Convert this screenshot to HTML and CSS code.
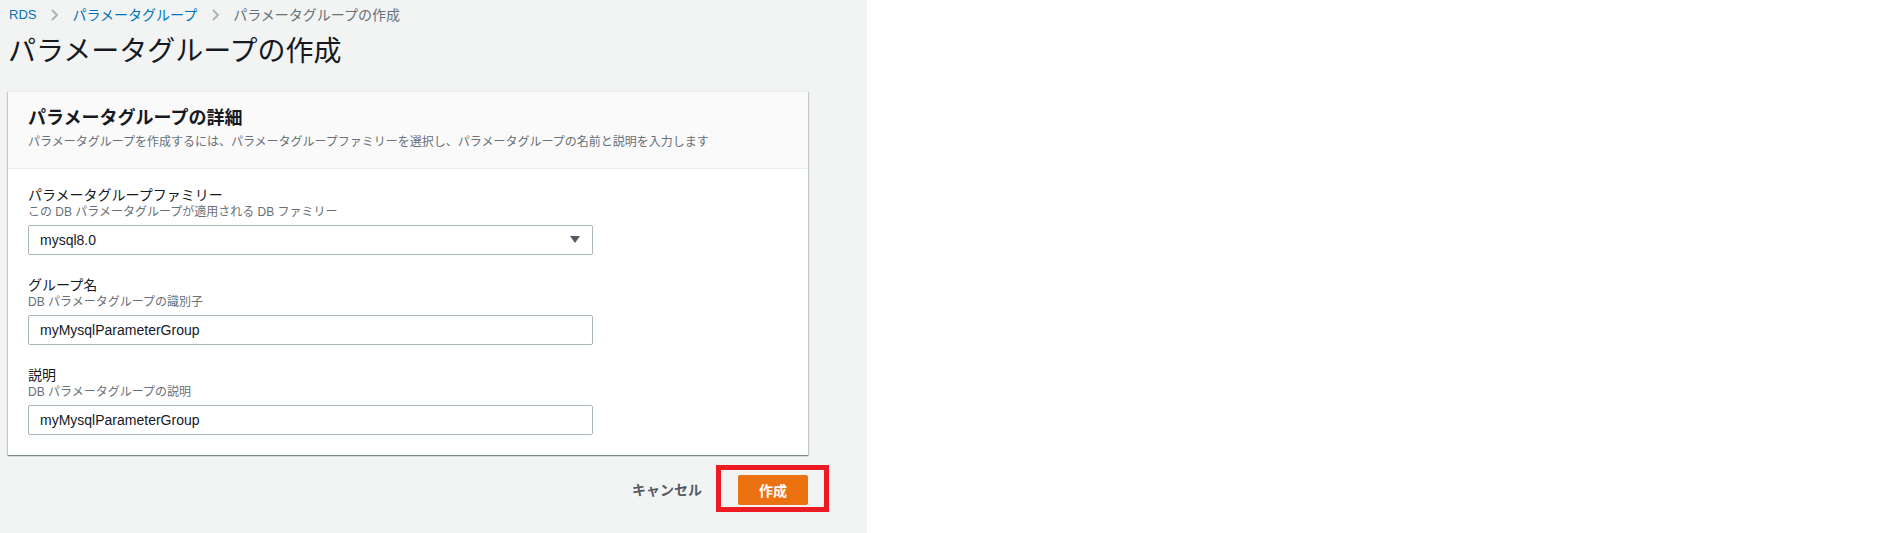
FILE: index.html
```html
<!DOCTYPE html>
<html lang="ja">
<head>
    <meta charset="UTF-8">
    <meta name="viewport" content="width=device-width, initial-scale=1.0">
    <title>パラメータグループの作成 | RDS</title>
    <link rel="stylesheet" href="styles.css">
</head>
<body>
    <div class="console">
        <!-- Breadcrumbs -->
        <nav class="breadcrumbs">
            <a href="#">RDS</a>
            <svg class="crumb-sep" width="8" height="12" viewBox="0 0 8 12"><polyline points="2,1 7,6 2,11" fill="none" stroke="#aab7b8" stroke-width="2"/></svg>
            <a href="#">パラメータグループ</a>
            <svg class="crumb-sep" width="8" height="12" viewBox="0 0 8 12"><polyline points="2,1 7,6 2,11" fill="none" stroke="#aab7b8" stroke-width="2"/></svg>
            <span class="crumb-current">パラメータグループの作成</span>
        </nav>

        <h1 class="page-title">パラメータグループの作成</h1>

        <form class="create-form" onsubmit="return false;">
            <section class="panel">
                <header class="panel-header">
                    <h2>パラメータグループの詳細</h2>
                    <p>パラメータグループを作成するには、パラメータグループファミリーを選択し、パラメータグループの名前と説明を入力します</p>
                </header>

                <div class="panel-body">
                    <div class="field">
                        <label for="pg-family">パラメータグループファミリー</label>
                        <p class="field-desc">この DB パラメータグループが適用される DB ファミリー</p>
                        <div class="select-wrap">
                            <select id="pg-family">
                                <option value="mysql8.0">mysql8.0</option>
                                <option value="mysql5.7">mysql5.7</option>
                            </select>
                            <svg class="select-arrow" width="10" height="7" viewBox="0 0 10 7"><polygon points="0,0 10,0 5,7" fill="#545b64"/></svg>
                        </div>
                    </div>

                    <div class="field">
                        <label for="pg-name">グループ名</label>
                        <p class="field-desc">DB パラメータグループの識別子</p>
                        <input type="text" id="pg-name" value="myMysqlParameterGroup">
                    </div>

                    <div class="field">
                        <label for="pg-description">説明</label>
                        <p class="field-desc">DB パラメータグループの説明</p>
                        <input type="text" id="pg-description" value="myMysqlParameterGroup">
                    </div>
                </div>
            </section>

            <div class="form-actions">
                <button type="button" class="btn-link">キャンセル</button>
                <span class="highlight">
                    <button type="submit" class="btn-primary">作成</button>
                </span>
            </div>
        </form>
    </div>
</body>
</html>
```

FILE: styles.css
```css
body {
    margin: 0;
    padding: 0;
    background-color: #ffffff;
    font-family: "Liberation Sans", "Noto Sans CJK JP", sans-serif;
    color: #16191f;
}
.console {
    width: 867px;
    min-height: 533px;
    box-sizing: border-box;
    padding: 5px 59px 0 8px;
    background-color: #f2f3f3;
}

/* breadcrumbs */
.breadcrumbs {
    display: flex;
    align-items: center;
    font-size: 14px;
    line-height: 20px;
    padding-left: 1px;
}
.breadcrumbs a {
    color: #0073bb;
    text-decoration: none;
}
.breadcrumbs a:first-child {
    font-size: 13px;
}
.crumb-sep {
    margin: 0 14px;
}
.crumb-current {
    color: #687078;
}

.page-title {
    margin: 9px 0 21px;
    font-size: 28px;
    line-height: 36px;
    font-weight: normal;
    color: #16191f;
}

/* panel */
.create-form {
    width: 800px;
}
.panel {
    background: #ffffff;
    border-top: 1px solid #eaeded;
    box-shadow: 0 1px 1px 0 rgba(0, 28, 36, 0.3),
                1px 1px 1px 0 rgba(0, 28, 36, 0.15),
                -1px 1px 1px 0 rgba(0, 28, 36, 0.15);
}
.panel-header {
    background: #fafafa;
    padding: 14px 20px 18px;
    border-bottom: 1px solid #eaeded;
}
.panel-header h2 {
    margin: 0;
    font-size: 18px;
    line-height: 24px;
    font-weight: bold;
}
.panel-header p {
    margin: 4px 0 0;
    font-size: 12px;
    line-height: 16px;
    color: #687078;
}
.panel-body {
    padding: 17px 20px 20px;
}

/* fields */
.field + .field {
    margin-top: 21px;
}
.field label {
    display: block;
    font-size: 14px;
    line-height: 18px;
}
.field-desc {
    margin: 0 0 5px;
    font-size: 12px;
    line-height: 16px;
    color: #687078;
}
.field input, .field select {
    display: block;
    width: 565px;
    height: 30px;
    box-sizing: border-box;
    margin: 0;
    padding: 0 11px;
    border: 1px solid #aab7b8;
    border-radius: 2px;
    background: #ffffff;
    font-family: "Liberation Sans", "Noto Sans CJK JP", sans-serif;
    font-size: 14px;
    color: #16191f;
    outline: none;
}
.field select {
    appearance: none;
    -webkit-appearance: none;
}
.select-wrap {
    position: relative;
    width: 565px;
}
.select-arrow {
    position: absolute;
    right: 13px;
    top: 11px;
    pointer-events: none;
}

/* actions */
.form-actions {
    display: flex;
    justify-content: flex-end;
    align-items: center;
    margin-top: 20px;
}
.btn-link {
    margin-right: 36px;
    padding: 0;
    border: none;
    background: none;
    font-family: "Liberation Sans", "Noto Sans CJK JP", sans-serif;
    font-size: 14px;
    font-weight: bold;
    line-height: 20px;
    color: #545b64;
}
.highlight {
    position: relative;
    display: flex;
}
.highlight::after {
    content: "";
    position: absolute;
    left: -22px;
    top: -10px;
    width: 113px;
    height: 47px;
    box-sizing: border-box;
    border: 5px solid #ed1c24;
    pointer-events: none;
}
.btn-primary {
    width: 70px;
    height: 30px;
    padding: 0;
    border: 1px solid #ec7211;
    border-radius: 2px;
    background-color: #ec7211;
    font-family: "Liberation Sans", "Noto Sans CJK JP", sans-serif;
    font-size: 14px;
    font-weight: bold;
    color: #ffffff;
}
```
